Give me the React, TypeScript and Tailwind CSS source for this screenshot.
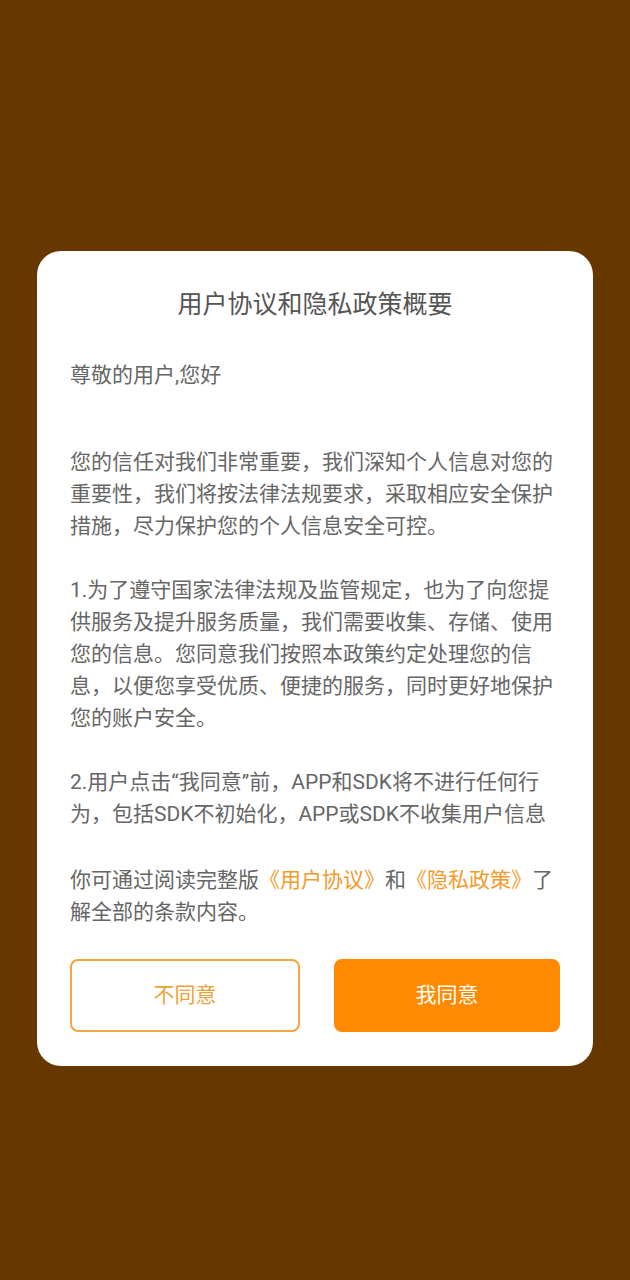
export default function App() {
  const font = { fontFamily: 'Roboto, "Noto Sans CJK SC", sans-serif' }

  return (
    <div
      className="min-h-screen w-full bg-[#663800] pt-[251px] pb-10"
      style={font}
    >
      <div className="mx-[37px] rounded-[24px] bg-white pl-[33px] pr-[33px] pt-[36px] pb-[34px]">
        {/* Title */}
        <h1 className="text-center text-[25px] leading-[36px] font-normal text-[#555555]">
          用户协议和隐私政策概要
        </h1>

        <p className="mt-[36px] text-[21px] leading-[32px] text-[#666666]">
          尊敬的用户,您好
        </p>

        {/* Scrollable summary */}
        <div className="mt-[55px] h-[384px] overflow-hidden text-[21px] leading-[32px] text-[#666666]">
          <p>
            您的信任对我们非常重要，我们深知个人信息对您的重要性，我们将按法律法规要求，采取相应安全保护措施，尽力保护您的个人信息安全可控。
          </p>
          <p className="mt-[32px]">
            1.为了遵守国家法律法规及监管规定，也为了向您提供服务及提升服务质量，我们需要收集、存储、使用您的信息。您同意我们按照本政策约定处理您的信息，以便您享受优质、便捷的服务，同时更好地保护您的账户安全。
          </p>
          <p className="mt-[32px]">
            2.用户点击“我同意”前，APP和SDK将不进行任何行为，包括SDK不初始化，APP或SDK不收集用户信息
          </p>
        </div>

        <p className="mt-[34px] text-[21px] leading-[32px] text-[#666666]">
          你可通过阅读完整版
          <span className="text-[#F39A2B]">《用户协议》</span>和
          <span className="text-[#F39A2B]">《隐私政策》</span>了解全部的条款内容。
        </p>

        {/* Buttons */}
        <div className="mt-[31px] flex gap-[34px]">
          <button
            type="button"
            className="h-[73px] flex-1 rounded-[8px] border-2 border-[#F2A541] bg-white text-[21px] text-[#F0A035]"
          >
            不同意
          </button>
          <button
            type="button"
            className="h-[73px] flex-1 rounded-[8px] bg-[#FF8A00] text-[21px] text-white"
          >
            我同意
          </button>
        </div>
      </div>
    </div>
  )
}
